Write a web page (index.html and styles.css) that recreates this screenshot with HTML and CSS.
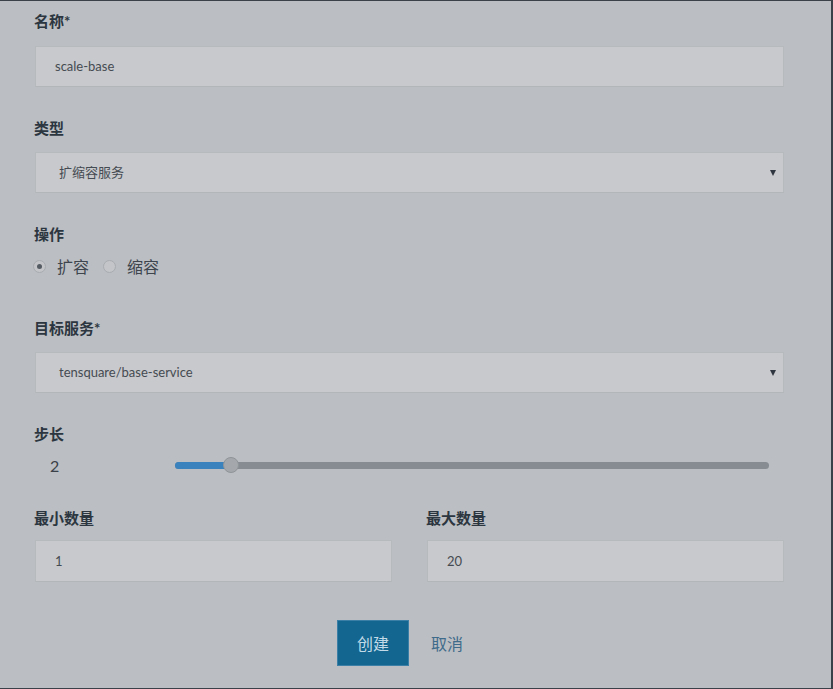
FILE: index.html
```html
<!DOCTYPE html>
<html lang="zh">
<head>
<meta charset="utf-8">
<title>扩缩容</title>
<link rel="stylesheet" href="styles.css">
</head>
<body>
<div class="frame">
  <form class="form">
    <div class="group">
      <div class="label">名称*</div>
      <div class="field">scale-base</div>
    </div>
    <div class="group">
      <div class="label">类型</div>
      <div class="field select"><span class="sel-text">扩缩容服务</span><span class="caret"></span></div>
    </div>
    <div class="group group-radio">
      <div class="label">操作</div>
      <div class="radios">
        <span class="radio checked"></span><span class="radio-text">扩容</span>
        <span class="radio"></span><span class="radio-text">缩容</span>
      </div>
    </div>
    <div class="group">
      <div class="label">目标服务*</div>
      <div class="field select"><span class="sel-text">tensquare/base-service</span><span class="caret"></span></div>
    </div>
    <div class="group group-slider">
      <div class="label">步长</div>
      <div class="slider-row">
        <span class="slider-value">2</span>
        <div class="track">
          <div class="fill" style="width:56px"></div>
          <div class="thumb"></div>
        </div>
      </div>
    </div>
    <div class="cols">
      <div class="col">
        <div class="label">最小数量</div>
        <div class="field num">1</div>
      </div>
      <div class="col">
        <div class="label">最大数量</div>
        <div class="field num">20</div>
      </div>
    </div>
    <div class="actions">
      <span class="btn-primary">创建</span>
      <span class="btn-link">取消</span>
    </div>
  </form>
</div>
</body>
</html>
```
FILE: styles.css
```css
* { box-sizing: border-box; }
html, body { margin: 0; padding: 0; }
body {
  background: #bbbec2;
  font-family: "Lato", "Noto Sans CJK SC", sans-serif;
  color: #3a424b;
}
.frame {
  width: 833px;
  height: 689px;
  border-top: 1px solid #3b4149;
  border-right: 2px solid #3b4149;
  border-bottom: 1px solid #3b4149;
  background: #bbbec2;
}
.form {
  margin: 0 0 0 34px;
  width: 750px;
  padding-top: 10px;
}
.group { margin-bottom: 31px; }
.label {
  font-size: 15px;
  line-height: 20px;
  font-weight: 700;
  color: #2c3640;
  margin-bottom: 14px;
}
.group:first-child .label { margin-bottom: 15px; }
.field {
  height: 41px;
  margin-left: 1px;
  background: #c8c9cc;
  border: 1px solid #b7babd;
  border-bottom-color: #b3b6b9;
  font-size: 13px;
  line-height: 39px;
  padding-left: 19px;
  color: #454b52;
}
.select {
  display: flex;
  align-items: center;
  justify-content: space-between;
  padding-left: 23px;
  padding-right: 7px;
}
.caret {
  width: 0;
  height: 0;
  border-left: 3px solid transparent;
  border-right: 3px solid transparent;
  border-top: 6px solid #2f3640;
}
.group-radio { margin-bottom: 40px; }
.group-radio .label { margin-bottom: 10px; }
.radios {
  display: flex;
  align-items: center;
  height: 24px;
  margin-left: -1px;
}
.radio {
  width: 13px;
  height: 13px;
  border-radius: 50%;
  border: 1px solid #a9acb0;
  background: #c3c5c8;
  display: flex;
  align-items: center;
  justify-content: center;
  margin-right: 11px;
}
.radio.checked::after {
  content: "";
  width: 5px;
  height: 5px;
  border-radius: 50%;
  background: #555b62;
}
.radio-text {
  font-size: 16px;
  color: #3e454d;
  margin-right: 14px;
}
.group-slider { margin-bottom: 30px; }
.group-slider .label { margin-bottom: 8px; }
.slider-row {
  display: flex;
  align-items: center;
  height: 26px;
}
.slider-value {
  width: 141px;
  padding-left: 16px;
  font-size: 16px;
  color: #3a4148;
}
.track {
  width: 594px;
  height: 7px;
  border-radius: 4px;
  background: #868c92;
  display: flex;
  align-items: center;
}
.fill {
  height: 7px;
  border-radius: 4px 0 0 4px;
  background: #3a82bd;
}
.thumb {
  width: 16px;
  height: 16px;
  border-radius: 50%;
  background: #a4a8ac;
  border: 1px solid #8f9499;
  margin-left: -8px;
}
.cols {
  display: grid;
  grid-template-columns: 358px 358px;
  column-gap: 34px;
}
.cols .label { margin-bottom: 12px; }
.num {
  height: 42px;
  line-height: 40px;
  padding-left: 19px;
  margin-left: 1px;
}
.actions {
  display: flex;
  align-items: center;
  margin-top: 38px;
  padding-left: 303px;
}
.btn-primary {
  width: 72px;
  height: 46px;
  background: #12668f;
  border: 1px solid #3c7fa6;
  color: #c3dbe8;
  font-size: 16px;
  display: flex;
  align-items: center;
  justify-content: center;
}
.btn-link {
  margin-left: 22px;
  font-size: 16px;
  color: #3f6b8b;
}
```
